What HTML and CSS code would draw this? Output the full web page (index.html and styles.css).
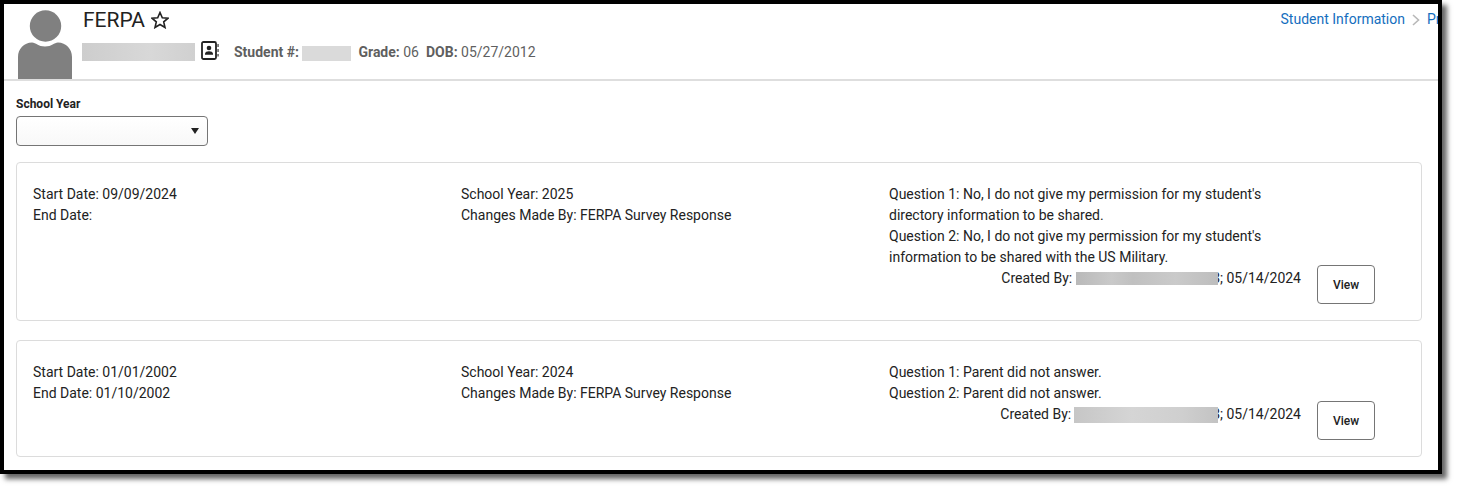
FILE: index.html
```html
<!DOCTYPE html>
<html lang="en">
<head>
<meta charset="utf-8">
<title>FERPA</title>
<link rel="stylesheet" href="styles.css">
</head>
<body>
<div class="frame">
  <header class="header">
    <svg class="avatar" viewBox="0 0 54 69" aria-hidden="true">
      <circle cx="27.500" cy="16" r="15.700"/>
      <path d="M0 69V47C0 39 6 32.500 14 32.500C18 32.500 20 36.500 27 36.500C34 36.500 36 32.500 40 32.500C48 32.500 54 39 54 47V69Z"/>
    </svg>
    <div class="identity">
      <div class="title-row">
        <h1 class="title">FERPA</h1>
        <button class="icon-button" type="button" aria-label="Favorite">
          <svg class="star" viewBox="0 0 18 18" aria-hidden="true"><path d="M9 1.500L11.300 6.700L17 7.200L12.700 10.900L14 16.500L9 13.500L4 16.500L5.300 10.900L1 7.200L6.700 6.700Z"/></svg>
        </button>
      </div>
      <div class="student-row">
        <span class="redacted redacted-name"></span>
        <button class="icon-button contact" type="button" aria-label="Contact card">
          <svg class="book" viewBox="0 0 18 19" aria-hidden="true">
            <rect x="1" y="1" width="14" height="17" rx="1.500" fill="none" stroke="#222" stroke-width="1.800"/>
            <circle cx="8" cy="7" r="2.300"/>
            <path d="M4 13.800V12.700C4 11 6 10.200 8 10.200S12 11 12 12.700V13.800ZM16.500 3H17.600V6H16.500ZM16.500 8H17.600V11H16.500ZM16.500 13H17.600V15.500H16.500Z"/>
          </svg>
        </button>
        <span class="fact"><b>Student #:</b> <span class="redacted redacted-number"></span></span>
        <span class="fact"><b>Grade:</b> 06</span>
        <span class="fact"><b>DOB:</b> 05/27/2012</span>
      </div>
    </div>
    <nav class="breadcrumb" aria-label="Breadcrumb">
      <a href="#">Student Information</a>
      <svg class="chevron" viewBox="0 0 8 12" aria-hidden="true"><path d="M1 1L6.500 6L1 11"/></svg>
      <a class="crumb-cut" href="#">Pr</a>
    </nav>
  </header>
  <main class="content">
    <label class="field-label" for="year">School Year</label>
    <div class="select-wrap">
      <select class="select" id="year"><option value=""></option></select>
      <svg class="caret" viewBox="0 0 8 6" aria-hidden="true"><path d="M0 0H8L4 6Z"/></svg>
    </div>
    <section class="card">
      <div class="column">
        <p>Start Date: 09/09/2024</p>
        <p>End Date:</p>
      </div>
      <div class="column">
        <p>School Year: 2025</p>
        <p>Changes Made By: FERPA Survey Response</p>
      </div>
      <div class="column">
        <p>Question 1: No, I do not give my permission for my student's directory information to be shared.</p>
        <p>Question 2: No, I do not give my permission for my student's information to be shared with the US Military.</p>
        <p class="created">Created By: <span class="redacted redacted-author"></span><span>3; 05/14/2024</span></p>
      </div>
      <button class="view" type="button">View</button>
    </section>
    <section class="card">
      <div class="column">
        <p>Start Date: 01/01/2002</p>
        <p>End Date: 01/10/2002</p>
      </div>
      <div class="column">
        <p>School Year: 2024</p>
        <p>Changes Made By: FERPA Survey Response</p>
      </div>
      <div class="column">
        <p>Question 1: Parent did not answer.</p>
        <p>Question 2: Parent did not answer.</p>
        <p class="created">Created By: <span class="redacted redacted-author light"></span><span>3; 05/14/2024</span></p>
      </div>
      <button class="view" type="button">View</button>
    </section>
  </main>
</div>
</body>
</html>
```
FILE: styles.css
```css
* {
  box-sizing: border-box;
}

body {
  margin: 0;
  padding: 0 15px 15px 0;
  background: #fff;
  color: #222;
  font: 14px/21px Roboto, "Liberation Sans", sans-serif;
}

p,
h1 {
  margin: 0;
}

.frame {
  border: 4px solid #000;
  background: #fff;
  box-shadow: 5px 5px 5px rgba(0, 0, 0, 0.6);
}

.header {
  display: flex;
  overflow: hidden;
  border-bottom: 2px solid #dedede;
  padding: 6px 0 0 14px;
}

.avatar {
  flex: none;
  display: block;
  width: 54px;
  height: 69px;
  fill: #808080;
}

.identity {
  flex: 1;
  padding-left: 10px;
}

.title-row {
  display: flex;
  align-items: center;
  gap: 6px;
  height: 20px;
  padding-left: 1px;
}

.title {
  font-size: 21px;
  line-height: 20px;
  font-weight: 400;
}

.icon-button {
  display: block;
  border: 0;
  padding: 0;
  background: none;
}

.star {
  display: block;
  width: 18px;
  height: 18px;
  fill: none;
  stroke: #222;
  stroke-width: 1.6;
}

.student-row {
  display: flex;
  align-items: center;
  gap: 7px;
  margin-top: 11px;
  color: #5f5f5f;
}

.contact {
  margin: 0 8px 3px -1px;
}

.book {
  display: block;
  width: 18px;
  height: 19px;
  fill: #222;
}

.redacted {
  display: inline-block;
  background: linear-gradient(90deg, #cdcdcd, #d8d8d8 60%, #d0d0d0);
}

.redacted-name {
  width: 113px;
  height: 18px;
}

.redacted-number {
  width: 49px;
  height: 15px;
  background: #dadada;
  vertical-align: -4px;
}

.breadcrumb {
  display: flex;
  gap: 7px;
  height: 20px;
  white-space: nowrap;
  line-height: 19px;
}

.breadcrumb a {
  color: #146ebe;
  text-decoration: none;
}

.breadcrumb .crumb-cut {
  width: 11px;
}

.chevron {
  width: 8px;
  height: 12px;
  margin-top: 4px;
  fill: none;
  stroke: #b8b8b8;
  stroke-width: 1.6;
}

.content {
  padding: 14px 16px 13px 12px;
}

.field-label {
  display: block;
  font-size: 12px;
  line-height: 18px;
  font-weight: 700;
}

.select-wrap {
  display: grid;
  align-items: center;
  width: 192px;
  margin: 3px 0 16px;
}

.select {
  grid-area: 1 / 1;
  appearance: none;
  height: 30px;
  border: 1px solid #757575;
  border-radius: 4px;
  background: linear-gradient(#fff, #f8f8f8);
}

.caret {
  grid-area: 1 / 1;
  justify-self: end;
  width: 8px;
  height: 6px;
  margin-right: 9px;
  fill: #222;
  pointer-events: none;
}

.card {
  display: grid;
  grid-template-columns: repeat(3, minmax(0, 1fr)) auto;
  column-gap: 16px;
  border: 1px solid #dcdcdc;
  border-radius: 4px;
  padding: 21px 46px 16px 16px;
}

.card + .card {
  margin-top: 19px;
}

.column {
  padding-bottom: 15px;
}

.created {
  display: flex;
  justify-content: flex-end;
  align-items: center;
}

.redacted-author {
  z-index: 1;
  width: 142px;
  height: 13px;
  margin: 0 -6px 0 4px;
  background: linear-gradient(90deg, #b9b9b9, #c9c9c9 25%, #c0c0c0 40%, #cacaca 70%, #bdbdbd);
}

.redacted-author.light {
  width: 144px;
  height: 16px;
  margin-left: 3px;
  background: linear-gradient(90deg, #c6c6c6, #d5d5d5 40%, #cfcfcf 75%, #c3c3c3);
}

.view {
  align-self: end;
  width: 58px;
  height: 39px;
  border: 1px solid #757575;
  border-radius: 4px;
  padding: 0;
  background: #fff;
  color: #222;
  font: 500 12px/18px Roboto, "Liberation Sans", sans-serif;
}
```
